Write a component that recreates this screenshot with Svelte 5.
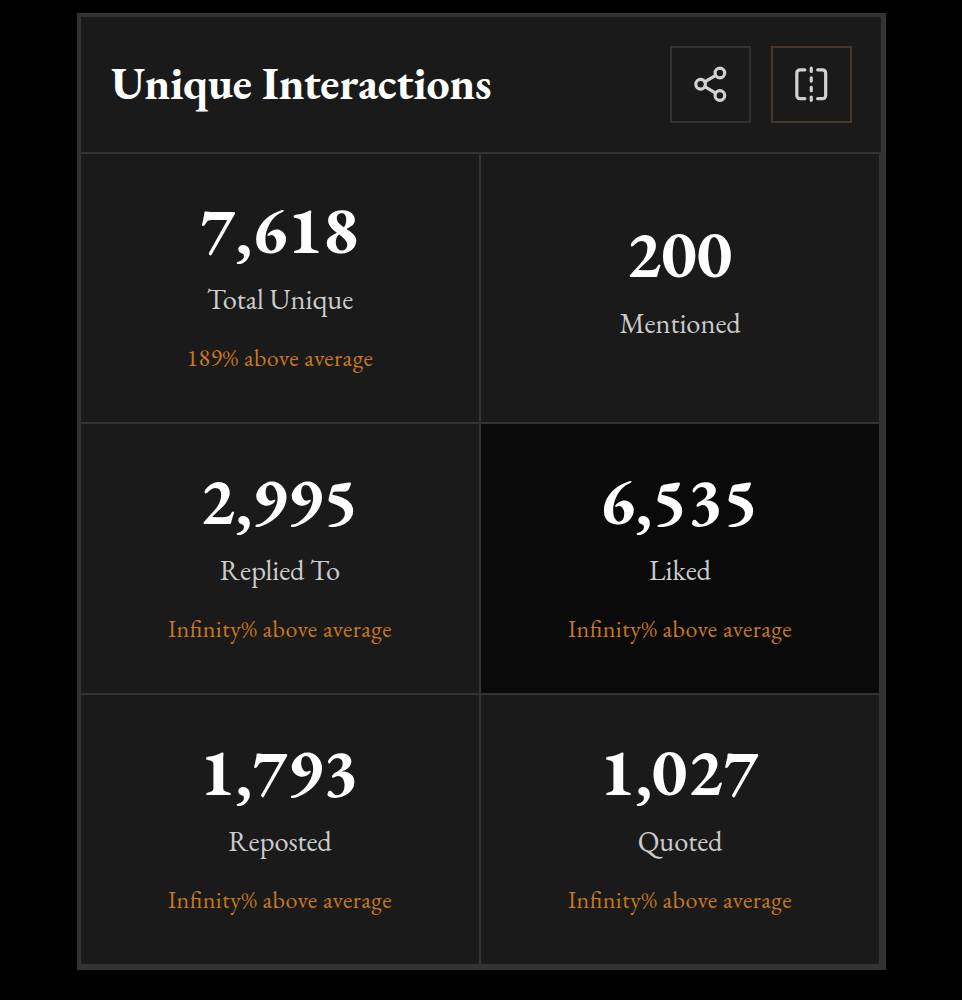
<script lang="ts">
  type Stat = { value: number; label: string; delta?: string; active?: boolean };

  const stats: Stat[] = [
    { value: 7618, label: "Total Unique", delta: "189%" },
    { value: 200, label: "Mentioned" },
    { value: 2995, label: "Replied To", delta: "Infinity%" },
    { value: 6535, label: "Liked", delta: "Infinity%", active: true },
    { value: 1793, label: "Reposted", delta: "Infinity%" },
    { value: 1027, label: "Quoted", delta: "Infinity%" },
  ];
</script>

<section class="card">
  <header>
    <h2>Unique Interactions</h2>
    <div class="actions">
      <button aria-label="Share">
        <svg viewBox="0 0 24 24">
          <circle cx="18" cy="5" r="3" />
          <circle cx="6" cy="12" r="3" />
          <circle cx="18" cy="19" r="3" />
          <path d="M8.59 13.51l6.83 3.98M15.41 6.51l-6.82 3.98" />
        </svg>
      </button>
      <button class="compare" aria-label="Compare">
        <svg viewBox="0 0 24 24">
          <path d="M8 3H5a2 2 0 0 0-2 2v14a2 2 0 0 0 2 2h3" />
          <path d="M16 3h3a2 2 0 0 1 2 2v14a2 2 0 0 1-2 2h-3" />
          <path d="M12 20v2M12 14v2M12 8v2M12 2v2" />
        </svg>
      </button>
    </div>
  </header>

  <div class="grid">
    {#each stats as stat (stat.label)}
      <div class="stat" class:active={stat.active}>
        <div class="value">{stat.value.toLocaleString("en-US")}</div>
        <div class="label">{stat.label}</div>
        {#if stat.delta}
          <div class="delta">{stat.delta} above average</div>
        {/if}
      </div>
    {/each}
  </div>
</section>

<style>
  :global(body) {
    background: #000;
  }

  .card {
    box-sizing: border-box;
    width: 809px;
    height: 957px;
    margin: 13px 0 0 77px;
    border: 4px solid #333;
    border-right-width: 5px;
    background: #1a1a1a;
    font-family: "EB Garamond", "Liberation Serif", serif;
    display: flex;
    flex-direction: column;
  }

  header {
    box-sizing: border-box;
    height: 137px;
    padding: 0 29px 0 30px;
    border-bottom: 2px solid #333;
    display: flex;
    align-items: center;
    justify-content: space-between;
  }

  h2 {
    margin: 0 0 3px;
    color: #fff;
    font-size: 46px;
    line-height: 56px;
    font-weight: 700;
    letter-spacing: -0.33px;
  }

  .actions {
    display: flex;
    gap: 20px;
  }

  button {
    box-sizing: border-box;
    width: 81px;
    height: 77px;
    padding: 0;
    border: 2px solid #333;
    background: none;
    color: #d1d1d1;
    display: flex;
    align-items: center;
    justify-content: center;
  }

  .compare {
    border-color: #46382b;
  }

  svg {
    width: 38.5px;
    height: 38.5px;
    fill: none;
    stroke: currentColor;
    stroke-width: 2;
    stroke-linecap: round;
    stroke-linejoin: round;
  }

  .grid {
    flex: 1;
    display: grid;
    grid-template-columns: 1fr 1fr;
    grid-template-rows: 270px 271px 271px;
  }

  .stat {
    border-right: 2px solid #333;
    border-bottom: 2px solid #333;
    display: flex;
    flex-direction: column;
    align-items: center;
    justify-content: center;
  }

  .active {
    background: #0a0a0a;
  }

  .value {
    margin-right: 2px;
    color: #fff;
    font-size: 67.2px;
    line-height: 67px;
    font-weight: 700;
  }

  .label {
    margin: 18px 0 15px;
    color: #ccc;
    font-size: 28.4px;
    line-height: 36px;
  }

  .delta {
    margin: 10px 0 6px;
    color: #c9781e;
    font-size: 24px;
    line-height: 32px;
    letter-spacing: 0.48px;
    font-feature-settings: "liga" 1;
  }
</style>
